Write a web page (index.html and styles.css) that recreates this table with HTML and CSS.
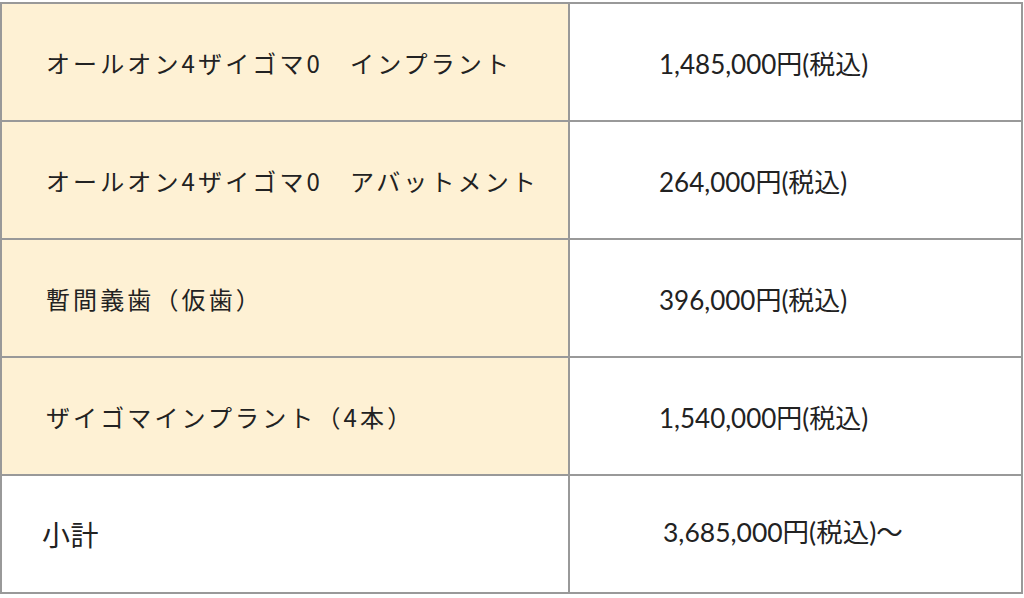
FILE: index.html
```html
<!DOCTYPE html>
<html lang="ja">
<head>
<meta charset="utf-8">
<link rel="stylesheet" href="styles.css">
</head>
<body>
<table class="price-table">
  <colgroup>
    <col class="col-item">
    <col class="col-price">
  </colgroup>
  <tbody>
    <tr>
      <th class="item">オールオン4ザイゴマ0　インプラント</th>
      <td class="price">1,485,000円(税込)</td>
    </tr>
    <tr>
      <th class="item">オールオン4ザイゴマ0　アバットメント</th>
      <td class="price">264,000円(税込)</td>
    </tr>
    <tr>
      <th class="item">暫間義歯（仮歯）</th>
      <td class="price">396,000円(税込)</td>
    </tr>
    <tr>
      <th class="item">ザイゴマインプラント（4本）</th>
      <td class="price">1,540,000円(税込)</td>
    </tr>
    <tr class="total">
      <th class="item">小計</th>
      <td class="price">3,685,000円(税込)〜</td>
    </tr>
  </tbody>
</table>
</body>
</html>
```

FILE: styles.css
```css
html, body {
  margin: 0;
  padding: 0;
  background: #ffffff;
}

body {
  padding-top: 2px;
}

.price-table {
  width: 1023px;
  border-collapse: collapse;
  table-layout: fixed;
  color: #222222;
}

.col-item {
  width: 568px;
}

.price-table th,
.price-table td {
  border: 2px solid #999999;
  height: 118px;
  padding: 0;
  vertical-align: middle;
  box-sizing: border-box;
}

.item {
  background: #fef1d4;
  text-align: left;
  font-weight: normal;
  font-family: "Noto Sans CJK JP", sans-serif;
  font-size: 24px;
  letter-spacing: 0.13em;
  padding: 0 0 0 44px !important;
}

.price {
  background: #ffffff;
  font-family: Lato, "Noto Sans CJK JP", sans-serif;
  font-size: 26px;
  padding: 0 0 0 89px !important;
}

.total .item {
  background: #ffffff;
  font-size: 28px;
  letter-spacing: 0.02em;
  padding: 0 0 0 40px !important;
}

.total .price {
  font-size: 26.5px;
  padding: 0 0 8px 93px !important;
}
```
